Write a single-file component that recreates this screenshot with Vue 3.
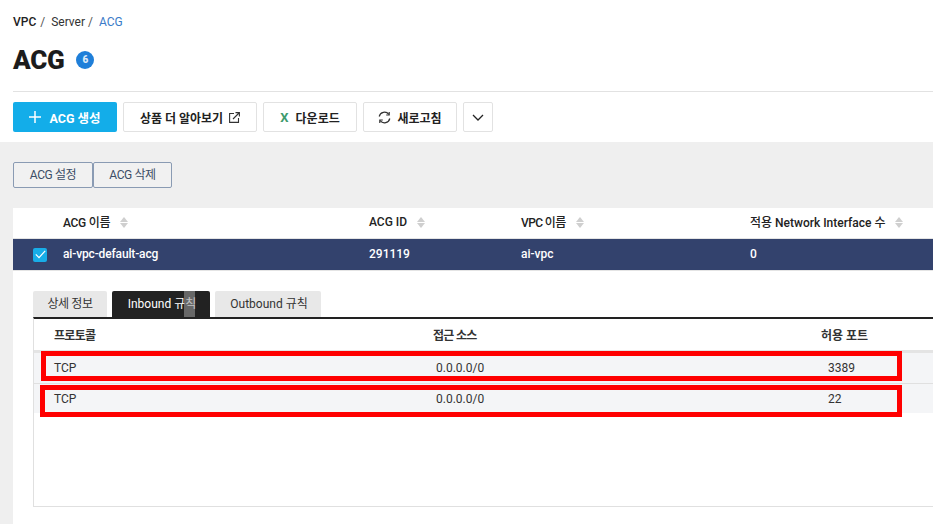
<script setup>
const toolbar = [
  { label: '상품 더 알아보기', icon: 'ext', w: 134 },
  { label: '다운로드', icon: 'x', w: 94 },
  { label: '새로고침', icon: 'refresh', w: 94 }
]
const columns = [
  { label: 'ACG 이름', w: 306, cls: 'tight' },
  { label: 'ACG ID', w: 152, cls: '' },
  { label: 'VPC 이름', w: 229, cls: 'tighter' },
  { label: '적용 Network Interface 수', w: 196, cls: '' }
]
const rules = [
  { proto: 'TCP', src: '0.0.0.0/0', port: '3389' },
  { proto: 'TCP', src: '0.0.0.0/0', port: '22' }
]
</script>

<template>
  <div class="page">
    <header class="head">
      <nav class="crumbs">
        <b>VPC</b><i>/</i><span>Server</span><i class="second">/</i><span class="cur">ACG</span>
      </nav>
      <div class="title">
        <h1>ACG</h1>
        <span class="badge">6</span>
      </div>
      <div class="rule"></div>
      <div class="toolbar">
        <button class="primary">
          <svg width="12" height="12" viewBox="0 0 12 12"><path d="M6 0v12M0 6h12" stroke="#fff" stroke-width="1.5" fill="none" /></svg>
          <span>ACG 생성</span>
        </button>
        <button v-for="b in toolbar" :key="b.label" class="tool" :style="{ width: b.w + 'px' }">
          <span v-if="b.icon === 'x'" class="xl">X</span>
          <svg v-if="b.icon === 'refresh'" width="13" height="13" viewBox="0 0 13 13" fill="none" stroke="#333" stroke-width="1.2">
            <path d="M1.2 5.5A5.4 5.4 0 0 1 10.8 3.4" />
            <path d="M11.8 7.5A5.4 5.4 0 0 1 2.2 9.6" />
            <path d="M11.2 1v3h-3M1.8 12V9h3" />
          </svg>
          <span>{{ b.label }}</span>
          <svg v-if="b.icon === 'ext'" width="11" height="11" viewBox="0 0 11 11" fill="none" stroke="#333" stroke-width="1.1">
            <path d="M5 1.5H.6v8.9h8.9V6" />
            <path d="M4 7 10 1M6.5.6h3.9v3.9" />
          </svg>
        </button>
        <button class="tool more">
          <svg width="12" height="7" viewBox="0 0 12 7" fill="none" stroke="#222" stroke-width="1.3"><path d="M1 1l5 5 5-5" /></svg>
        </button>
      </div>
    </header>

    <main class="body">
      <div class="actions">
        <button>ACG 설정</button>
        <button>ACG 삭제</button>
      </div>

      <section class="panel">
        <div class="thead">
          <div class="check-col"></div>
          <div v-for="c in columns" :key="c.label" class="th" :style="{ width: c.w + 'px' }">
            <span :class="c.cls">{{ c.label }}</span>
            <span class="sort"><em class="up"></em><em class="down"></em></span>
          </div>
        </div>
        <div class="selected">
          <div class="check-col">
            <span class="box">
              <svg width="11" height="9" viewBox="0 0 11 9" fill="none" stroke="#fff" stroke-width="1.2"><path d="M.8 4.4l3.2 3.2L10.2.8" /></svg>
            </span>
          </div>
          <div class="td name" :style="{ width: columns[0].w + 'px' }">ai-vpc-default-acg</div>
          <div class="td" :style="{ width: columns[1].w + 'px' }">291119</div>
          <div class="td" :style="{ width: columns[2].w + 'px' }">ai-vpc</div>
          <div class="td" :style="{ width: columns[3].w + 'px' }">0</div>
        </div>

        <div class="detail">
          <div class="tabs">
            <div class="tab t1">상세 정보</div>
            <div class="tab t2 active">Inbound 규칙<span class="cursor"></span></div>
            <div class="tab t3">Outbound 규칙</div>
          </div>
          <div class="rules">
            <div class="rhead">
              <div class="c1 narrow">프로토콜</div>
              <div class="c2 narrow">접근 소스</div>
              <div class="c3">허용 포트</div>
            </div>
            <div v-for="(r, i) in rules" :key="i" class="rrow" :class="'r' + i">
              <div class="c1">{{ r.proto }}</div>
              <div class="c2 val">{{ r.src }}</div>
              <div class="c3 val">{{ r.port }}</div>
            </div>
            <div class="mark m1"></div>
            <div class="mark m2"></div>
          </div>
        </div>
      </section>
    </main>
  </div>
</template>

<style>
html, body { margin: 0; overflow: hidden; background: #fff; }
</style>

<style scoped>
.page {
  width: 933px;
  height: 524px;
  overflow: hidden;
  font-family: Roboto, "Noto Sans CJK KR", sans-serif;
  color: #222;
  background: #fff;
}
button { font-family: inherit; cursor: pointer; padding: 0; }
.head { height: 142px; box-sizing: border-box; padding: 15px 0 0 13px; }
.crumbs { height: 15px; display: flex; align-items: center; gap: 4px; font-size: 12px; line-height: 15px; color: #333; }
.crumbs b { font-weight: 500; color: #222; }
.crumbs i { font-style: normal; color: #555; margin-right: 2px; }
.crumbs .second { margin-left: -1px; margin-right: 2px; }
.crumbs .cur { color: #3a7bc8; }
.title { display: flex; align-items: center; height: 30px; margin-top: 15px; gap: 12px; }
.title h1 { margin: 0; font-size: 26px; line-height: 30px; font-weight: 900; color: #1c1c1c; letter-spacing: -0.3px; }
.badge {
  width: 18px; height: 18px; border-radius: 50%; background: #1f7fd9; color: #dbe9f7;
  display: flex; align-items: center; justify-content: center; font-size: 10px; font-weight: 900; line-height: 18px;
}
.rule { height: 1px; background: #e2e2e2; margin-top: 16px; }
.toolbar { display: flex; gap: 6px; margin-top: 10px; height: 30px; }
.primary {
  width: 104px; height: 30px; border: 0; border-radius: 2px; background: #13ade9; color: #fff;
  font-size: 12.5px; font-weight: 700; display: flex; align-items: center; justify-content: center; gap: 8px;
}
.tool {
  height: 30px; box-sizing: border-box; background: #fff; border: 1px solid #e2e2e2; border-radius: 2px;
  font-size: 12px; font-weight: 700; color: #222; display: flex; align-items: center; justify-content: center; gap: 6px;
}
.more { width: 30px; }
.xl { color: #3f9b6e; font-weight: 700; font-size: 13px; margin-right: 1px; }
.body { height: 382px; background: #efefef; padding: 20px 0 0 13px; box-sizing: border-box; }
.actions { display: flex; height: 26px; }
.actions button {
  width: 80px; height: 26px; box-sizing: border-box; background: #f1f1f1; border: 1px solid #8a9bb3; border-radius: 2px;
  font-size: 12px; color: #3c4d66; font-weight: 400; letter-spacing: -0.4px; padding-bottom: 3px;
}
.actions button + button { width: 79px; }
.panel { margin-top: 20px; background: #fff; height: 316px; }
.thead { display: flex; height: 30px; align-items: center; border-bottom: 1px solid #e4e4e4; }
.check-col { width: 50px; flex: none; display: flex; align-items: center; padding-left: 20px; box-sizing: border-box; }
.th { flex: none; display: flex; align-items: center; gap: 10px; font-size: 12px; font-weight: 500; color: #222; white-space: nowrap; padding-bottom: 3px; }
.tight { letter-spacing: -0.3px; }
.tighter { letter-spacing: -0.6px; }
.sort { display: inline-flex; flex-direction: column; gap: 1px; margin-top: 2px; }
.sort em { display: block; width: 0; height: 0; border-left: 4px solid transparent; border-right: 4px solid transparent; }
.sort .up { border-bottom: 5px solid #cfcfcf; }
.sort .down { border-top: 5px solid #cfcfcf; }
.selected { display: flex; height: 31px; align-items: center; background: #33426d; color: #fff; font-size: 12px; font-weight: 500; border-bottom: 1px solid #e4e4e4; }
.td { flex: none; white-space: nowrap; padding-bottom: 2px; }
.td.name { letter-spacing: -0.15px; }
.box { width: 14px; height: 14px; border-radius: 2px; background: #18ade8; display: flex; align-items: center; justify-content: center; }
.detail { padding: 20px 0 0 20px; }
.tabs { display: flex; height: 26px; gap: 5px; align-items: flex-end; }
.tab {
  height: 26px; line-height: 27px; text-align: center; font-size: 12px; color: #333; background: #e8e8e8;
  border-radius: 2px 2px 0 0; position: relative; box-sizing: border-box;
}
.t1 { width: 74px; letter-spacing: -0.4px; }
.t2 { width: 98px; padding-left: 2px; }
.t3 { width: 106px; padding-left: 2px; }
.tab.active { background: #222; color: #fff; }
.cursor { position: absolute; left: 72px; top: 0; width: 11px; height: 26px; background: rgba(150, 150, 150, 0.6); }
.rules {
  position: relative; height: 190px; box-sizing: border-box;
  border-top: 2px solid #222; border-left: 1px solid #e0e0e0; border-bottom: 1px solid #e0e0e0;
  font-size: 12px;
}
.rhead { display: flex; height: 31px; align-items: center; font-weight: 700; color: #333; border-bottom: 3px solid #e4e4e4; }
.rrow { display: flex; align-items: center; background: #f4f5f7; color: #333; }
.r0 { height: 30px; border-bottom: 1px solid #e0e0e0; }
.r1 { height: 29px; }
.c1 { padding-left: 20px; flex: none; width: 380px; box-sizing: border-box; white-space: nowrap; }
.c2 { flex: none; width: 400px; box-sizing: border-box; padding-left: 19px; white-space: nowrap; }
.c2.val { padding-left: 22px; }
.c3 { flex: none; white-space: nowrap; padding-left: 7px; }
.c3.val { padding-left: 14px; }
.narrow { letter-spacing: -0.7px; }
.mark { position: absolute; border: 5px solid #f00; box-sizing: border-box; pointer-events: none; }
.m1 { left: 7px; top: 32px; width: 861px; height: 30px; }
.m2 { left: 6px; top: 66px; width: 862px; height: 32px; }
</style>
